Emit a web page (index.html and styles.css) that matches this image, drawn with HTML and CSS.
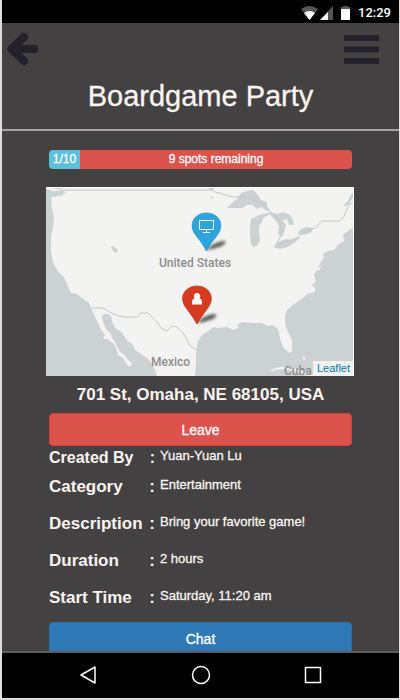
FILE: index.html
```html
<!DOCTYPE html>
<html lang="en">
<head>
<meta charset="utf-8">
<meta name="viewport" content="width=device-width, initial-scale=1">
<title>Boardgame Party</title>
<link rel="stylesheet" href="styles.css">
</head>
<body>
<div class="status-bar">
  <svg class="status-icons" width="50" height="14" viewBox="0 0 50 14" aria-hidden="true">
    <path fill="#555" d="M0 3Q8-3 17 3L8.500 14Z"/>
    <path fill="#fff" d="M3 7Q8.500 3 14 7L8.500 14Z"/>
    <path fill="#555" d="M32 0V14H19Z"/>
    <path fill="#fff" d="M27 6V14H19Z"/>
    <path fill="#555" d="M42 0h5v1h2v3h-9V1h2z"/>
    <path fill="#fff" d="M40 3h9v11h-9z"/>
  </svg>
  <span>12:29</span>
</div>
<header class="header">
  <div class="header-actions">
    <button class="icon-button" type="button" aria-label="Back">
      <svg width="32" height="34" viewBox="0 0 32 34"><path fill="none" stroke="#23222a" stroke-width="8" stroke-linecap="round" stroke-linejoin="round" d="M17 5L4.500 17L17 29"/><path fill="#23222a" d="M7 13H28Q31 13 31 16V18Q31 21 28 21H7Z"/></svg>
    </button>
    <button class="icon-button" type="button" aria-label="Menu">
      <svg width="35" height="34" viewBox="0 0 35 34"><path fill="#23222a" d="M0 3h35v6H0zM0 14.500h35v6H0zM0 26h35v6H0z"/></svg>
    </button>
  </div>
  <h1>Boardgame Party</h1>
</header>
<main class="content">
  <div class="progress">
    <div class="progress-taken">1/10</div>
    <div class="progress-left">9 spots remaining</div>
  </div>
  <div class="map">
    <svg class="map-canvas" viewBox="0 0 308 189" preserveAspectRatio="xMidYMid slice" role="img" aria-label="Map">
      <defs><filter id="soft" x="-30%" y="-60%" width="160%" height="220%"><feGaussianBlur stdDeviation="1.500"/></filter></defs>
      <rect width="308" height="189" fill="#f3f3f2"/>
      <g fill="#cad2d3">
        <path d="M0 2L4 3L9 5L14 4L14 8L9 10L4 10L6 13L5 18L6 22L8 30L7 40L5 50L5 63L6 70L7 76L10 81L13 86L18 90L22 99L25 106L31 107L36 111L43 116L46 123L49 130L52 136L55 142L59 148L57 152L61 152L67 156L70 160L72 168L77 171L81 178L84 180L86 176L81 172L79 168L74 165L70 157L66 151L65 147L60 142L57 135L56 129L58 127L62 127L65 129L66 134L69 141L75 145L81 153L87 158L89 163L95 167L101 171L106 177L109 183L111 189H0Z"/>
        <path d="M149 189L150 178L150 166L152 154L156 148L164 143L167 140L173 141L181 140L187 143L193 141L191 138L196 135L207 136L216 136L222 139L226 138L231 141L233 145L234 151L237 160L243 166L246 164L246 153L242 145L240 140L239 134L239 128L241 123L247 118L257 111L261 107L269 105L269 101L266 98L270 94L268 88L270 84L274 83L275 78L272 82L274 76L278 71L277 67L282 64L288 63L292 58L298 54L297 48L302 44L308 40V189Z"/>
        <path d="M181 21L187 15L191 12L195 6L202 4L207 3L212 8L215 13L221 15L221 20L224 24L219 23L215 20L211 22L207 18L201 18L196 21L190 21Z"/>
        <path d="M204 40L205 32L211 29L216 27L223 26L227 25L221 29L217 31L216 35L213 39L213 46L214 53L211 59L207 60L205 56L204 49Z"/>
        <path d="M223 25L231 27L237 25L244 28L246 31L248 38L243 38L241 32L237 33L240 38L238 46L236 50L232 47L233 39L230 34L226 30Z"/>
        <path d="M228 59L232 55L240 52L246 53L252 50L254 51L248 56L242 60L234 62L229 61Z"/>
        <path d="M251 47L254 43L260 40L268 41L264 46L257 48Z"/>
        <path d="M298 18L302 14L305 7L308 4L308 9L303 17L299 20Z"/>
        <path d="M65 60L67 59L72 63L71 66L68 65Z"/>
        <path d="M3 0h13v2h-5zM163 1l5-1-1 3h-3zM164 10l4-1-2 3zM6 5l10-2 4 2-5 4z"/>
      </g>
      <g fill="#f3f3f2"><path d="M223 184Q232 178 247 181Q258 184 268 189H262Q250 183 238 182Q231 182 226 184ZM257 169l2 1v3h-2z"/></g>
      <g fill="none" stroke="#c5c8c8">
        <path d="M14 3H154L165 3L169 5L177 7L183 9L189 10L201 9L212 15L220 20L224 25L232 31L235 38L235 48L231 56L233 58L243 54L252 50L258 45L269 41L276 34H293L298 30L300 24L304 17L308 15"/>
        <path d="M46 121L57 121L67 127L77 130H92L94 126H102L107 131L111 135L115 141L121 144L126 139L131 140L137 146L140 151L144 159L149 162L152 163"/>
      </g>
      <path d="M0 .5H308M307.500 0V189" stroke="#fff" fill="none"/>
      <g class="map-labels"><text x="113" y="80">United States</text><text x="105" y="179">Mexico</text><text x="238" y="188">Cuba</text></g>
      <g fill="#444" opacity=".85" filter="url(#soft)"><path d="M160 63Q168 55 177 54Q183 54 176 59Q169 62 160 63Z"/><path d="M151 136Q158 128 167 127Q174 127 167 132Q160 135 151 136Z"/></g>
      <path fill="#2ea4df" stroke="#238ec7" stroke-width=".7" d="M160.500 64Q157 57 150 48.500C141 37 149 26 160.500 26S180 37 171 48.500Q164 57 160.500 64Z"/>
      <path fill="none" stroke="#fff" stroke-width="1" d="M153.500 33.500h14v9h-14zM160.500 43v2M157 45.500h7"/>
      <path fill="#d63b20" stroke="#bd311c" stroke-width=".7" d="M151 137Q147 130 140.500 121.500C131.500 110 139.500 99 151 99S170.500 110 161.500 121.500Q155 130 151 137Z"/>
      <path fill="#fff" d="M151 106a3.200 3.200 0 0 1 2.500 5.300Q156 112 156 115V117.500H146V115Q146 112 148.500 111.300A3.200 3.200 0 0 1 151 106Z"/>
    </svg>
    <a class="map-credit" href="#">Leaflet</a>
  </div>
  <h2>701 St, Omaha, NE 68105, USA</h2>
  <button class="button button-leave" type="button">Leave</button>
  <dl class="details">
    <div class="row row-first"><dt>Created By</dt><dd>Yuan-Yuan Lu</dd></div>
    <div class="row row-short"><dt>Category</dt><dd>Entertainment</dd></div>
    <div class="row"><dt>Description</dt><dd>Bring your favorite game!</dd></div>
    <div class="row"><dt>Duration</dt><dd>2 hours</dd></div>
    <div class="row"><dt>Start Time</dt><dd>Saturday, 11:20 am</dd></div>
  </dl>
  <button class="button button-chat" type="button">Chat</button>
</main>
<nav class="nav-bar" aria-label="System">
  <button class="icon-button" type="button" aria-label="Back"><svg width="18" height="20" viewBox="0 0 18 20"><path d="M16 2V18L2 10Z"/></svg></button>
  <button class="icon-button" type="button" aria-label="Home"><svg width="20" height="20" viewBox="0 0 20 20"><circle cx="10" cy="10" r="8.500"/></svg></button>
  <button class="icon-button" type="button" aria-label="Recent"><svg width="18" height="20" viewBox="0 0 18 20"><rect x="1.500" y="2.500" width="15" height="15"/></svg></button>
</nav>
</body>
</html>
```
FILE: styles.css
```css
* { box-sizing: border-box; }

body {
  display: flex;
  flex-direction: column;
  height: 100vh;
  margin: 0;
  padding: 0 1px 2px 2px;
  background: #dedede;
  color: #fbf4f0;
  font-family: "Liberation Sans", Arial, sans-serif;
}

h1, h2, dl, dt, dd { margin: 0; }

button { font-family: inherit; cursor: pointer; }

.icon-button {
  display: flex;
  padding: 0;
  border: 0;
  background: none;
}

.status-bar {
  display: flex;
  flex: none;
  align-items: center;
  justify-content: flex-end;
  gap: 7px;
  height: 23px;
  padding: 2px 8px 0 0;
  background: #000;
  color: #fff;
  font: 500 13px/20px Roboto, sans-serif;
}

.header {
  flex: none;
  padding: 9px 20px 15px 5px;
  border-bottom: 2px solid #a5a4a4;
  background: #434142;
}

.header-actions {
  display: flex;
  justify-content: space-between;
}

h1 {
  padding: 12px 0 0 15px;
  font-size: 29px;
  font-weight: 400;
  line-height: 36px;
  text-align: center;
  -webkit-text-stroke: 0.3px;
}

.content {
  display: flex;
  flex: 1;
  flex-direction: column;
  min-height: 0;
  overflow: hidden;
  padding: 19px 47px 0;
  background: #434142;
}

.content > * { flex: none; }

.progress {
  display: flex;
  height: 19px;
  overflow: hidden;
  border-radius: 4px;
  font-size: 12px;
  line-height: 19px;
  text-align: center;
  color: #fff;
  -webkit-text-stroke: 0.3px;
}

.progress-taken { width: 10%; min-width: 31px; background: #5bc0de; }
.progress-left { flex: 1; background: #dc534c; }

.map {
  position: relative;
  margin: 18px -2px 0 -3px;
}

.map-canvas { display: block; width: 100%; }

.map-labels {
  fill: #8c8d8d;
  font: 500 12px Roboto, sans-serif;
}

.map-credit {
  position: absolute;
  right: 0;
  bottom: 0;
  padding: 0 4px;
  background: rgba(255, 255, 255, 0.75);
  color: #0078a8;
  font-size: 11px;
  line-height: 15px;
  text-decoration: none;
}

h2 {
  margin: 7px -10px 6px;
  font-size: 17px;
  line-height: 24px;
  text-align: center;
}

.button {
  width: 100%;
  height: 33px;
  border: 1px solid;
  border-radius: 4px;
  color: #fff;
  font-size: 14px;
  -webkit-text-stroke: 0.3px;
}

.button-leave { border-color: #d43f3a; background: #dc534c; }
.button-chat { border-color: #2e6da4; background: #2f79b9; }

.row {
  display: grid;
  grid-template-columns: 101px 1fr;
  column-gap: 10px;
  height: 37px;
  padding-top: 6px;
  line-height: 24px;
}

.row-first { height: 27px; padding-top: 0; }
.row-first dt { font-size: 16px; }
.row-short { padding-top: 2px; height: 33px; }

dt {
  display: flex;
  justify-content: space-between;
  font-size: 17px;
  font-weight: 700;
}

dt::after { content: ":"; margin-right: -5px; }

dd {
  font-size: 13px;
  line-height: 20px;
  -webkit-text-stroke: 0.3px;
}

.button-chat { margin-top: 5px; }

.nav-bar {
  display: flex;
  flex: none;
  align-items: center;
  justify-content: space-between;
  height: 47px;
  padding: 0 77px 2px;
  border-top: 2px solid #5d5c5c;
  background: #000;
}

.nav-bar svg {
  fill: none;
  stroke: #fff;
  stroke-width: 1.5px;
  stroke-linejoin: round;
}
```
